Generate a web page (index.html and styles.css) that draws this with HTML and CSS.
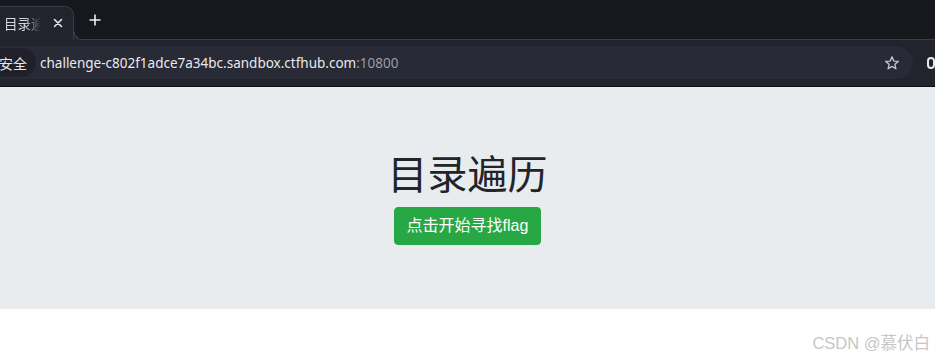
FILE: index.html
```html
<!DOCTYPE html>
<html lang="zh-CN">
<head>
<meta charset="utf-8">
<title>目录遍历</title>
<link rel="stylesheet" href="styles.css">
</head>
<body>
<div class="browser">
  <div class="tabbar">
    <div class="tab">
      <span class="tab-title">目录遍</span>
      <span class="tab-close">
        <svg width="10" height="10" viewBox="0 0 10 10"><path d="M1.5 1.5 L8.5 8.5 M8.5 1.5 L1.5 8.5" stroke="#e6e6ea" stroke-width="1.6" stroke-linecap="round"/></svg>
      </span>
    </div>
    <span class="newtab">
      <svg width="12" height="12" viewBox="0 0 12 12"><path d="M6 0.5 V11.5 M0.5 6 H11.5" stroke="#f0f0f3" stroke-width="1.6"/></svg>
    </span>
  </div>
  <div class="toolbar">
    <div class="omnibox">
      <span class="chip">安全</span>
      <span class="url">challenge-c802f1adce7a34bc.sandbox.ctfhub.com<span class="port">:10800</span></span>
      <span class="star">
        <svg width="16" height="16" viewBox="0 0 24 24"><path d="M12 2.8 L14.7 9.1 L21.5 9.6 L16.3 14 L17.9 20.7 L12 17.1 L6.1 20.7 L7.7 14 L2.5 9.6 L9.3 9.1 Z" fill="none" stroke="#c4c6cf" stroke-width="2" stroke-linejoin="round"/></svg>
      </span>
    </div>
    <span class="profile"></span>
  </div>
  <div class="page">
    <div class="jumbotron">
      <h1 class="title">目录遍历</h1>
      <a class="btn">点击开始寻找flag</a>
    </div>
    <div class="watermark">CSDN @慕伏白</div>
  </div>
</div>
</body>
</html>
```
FILE: styles.css
```css
* { box-sizing: border-box; }
html, body { margin: 0; padding: 0; }
body {
  width: 935px;
  height: 360px;
  overflow: hidden;
  background: #ffffff;
  font-family: "Liberation Sans", "Noto Sans CJK SC", sans-serif;
}
.browser { display: flex; flex-direction: column; height: 360px; }

.tabbar {
  height: 39px;
  background: #17181d;
  display: flex;
  align-items: flex-end;
  flex-shrink: 0;
}
.tab {
  position: relative;
  z-index: 1;
  margin-left: -14px;
  margin-bottom: -1px;
  width: 88px;
  height: 34px;
  background: #22242d;
  border: 1px solid #3a3c47;
  border-bottom: none;
  border-radius: 9px 9px 0 0;
  display: flex;
  align-items: center;
  padding-left: 17px;
  padding-bottom: 1px;
}
.tab::after {
  content: "";
  position: absolute;
  right: -9px;
  bottom: 0;
  width: 8px;
  height: 8px;
  background: radial-gradient(circle at 100% 0, transparent 7px, #3a3c47 7px, #3a3c47 8px, #22242d 8px);
}
.tab-title {
  font-family: "Noto Sans CJK SC", sans-serif;
  font-size: 13.5px;
  color: #d7d8de;
  width: 37px;
  white-space: nowrap;
  -webkit-mask-image: linear-gradient(to right, #000 55%, transparent 100%);
  mask-image: linear-gradient(to right, #000 55%, transparent 100%);
}
.tab-close {
  margin-left: 12px;
  display: flex;
  align-items: center;
}
.newtab {
  margin-left: 15px;
  margin-bottom: 13px;
  display: flex;
}

.toolbar {
  height: 48px;
  background: #22242d;
  border-top: 1px solid #3a3c47;
  border-bottom: 1px solid #0e0f13;
  display: flex;
  align-items: center;
  flex-shrink: 0;
}
.omnibox {
  margin-left: -20px;
  width: 933px;
  height: 33px;
  margin-top: -1px;
  border-radius: 17px;
  background: #282a35;
  display: flex;
  align-items: center;
}
.chip {
  height: 29px;
  margin-left: 2px;
  padding: 0 9px 0 17px;
  border-radius: 15px;
  background: #1f2029;
  display: flex;
  align-items: center;
  font-family: "Noto Sans CJK SC", sans-serif;
  font-size: 14px;
  color: #e8e9ee;
}
.url {
  margin-left: 4px;
  font-family: "Noto Sans", "Noto Sans CJK SC", sans-serif;
  font-size: 13.5px;
  color: #e8e9ee;
  flex: 1;
}
.port { color: #9a9ca6; }
.star {
  display: flex;
  margin-right: 13px;
}
.profile {
  margin-left: 14px;
  width: 8px;
  height: 12px;
  border: 2px solid #e8e9ee;
  border-radius: 4px;
  flex-shrink: 0;
}

.page {
  position: relative;
  flex: 1;
  background: #ffffff;
}
.jumbotron {
  background: #e9ecef;
  padding: 64px 32px;
  display: flex;
  flex-direction: column;
  align-items: center;
}
.title {
  margin: 0 0 14px;
  font-family: "Noto Sans CJK SC", sans-serif;
  font-weight: 400;
  font-size: 40px;
  line-height: 42px;
  color: #212529;
}
.btn {
  display: inline-block;
  height: 38px;
  padding: 6px 12px;
  border: 1px solid #28a745;
  border-radius: 4px;
  background: #28a745;
  color: #ffffff;
  font-size: 16px;
  line-height: 24px;
  font-family: "Liberation Sans", "Noto Sans CJK SC", sans-serif;
}
.watermark {
  position: absolute;
  right: 5px;
  bottom: 6px;
  font-family: "Liberation Sans", "Noto Sans CJK SC", sans-serif;
  font-size: 16.5px;
  color: #c6c6c6;
}
```
